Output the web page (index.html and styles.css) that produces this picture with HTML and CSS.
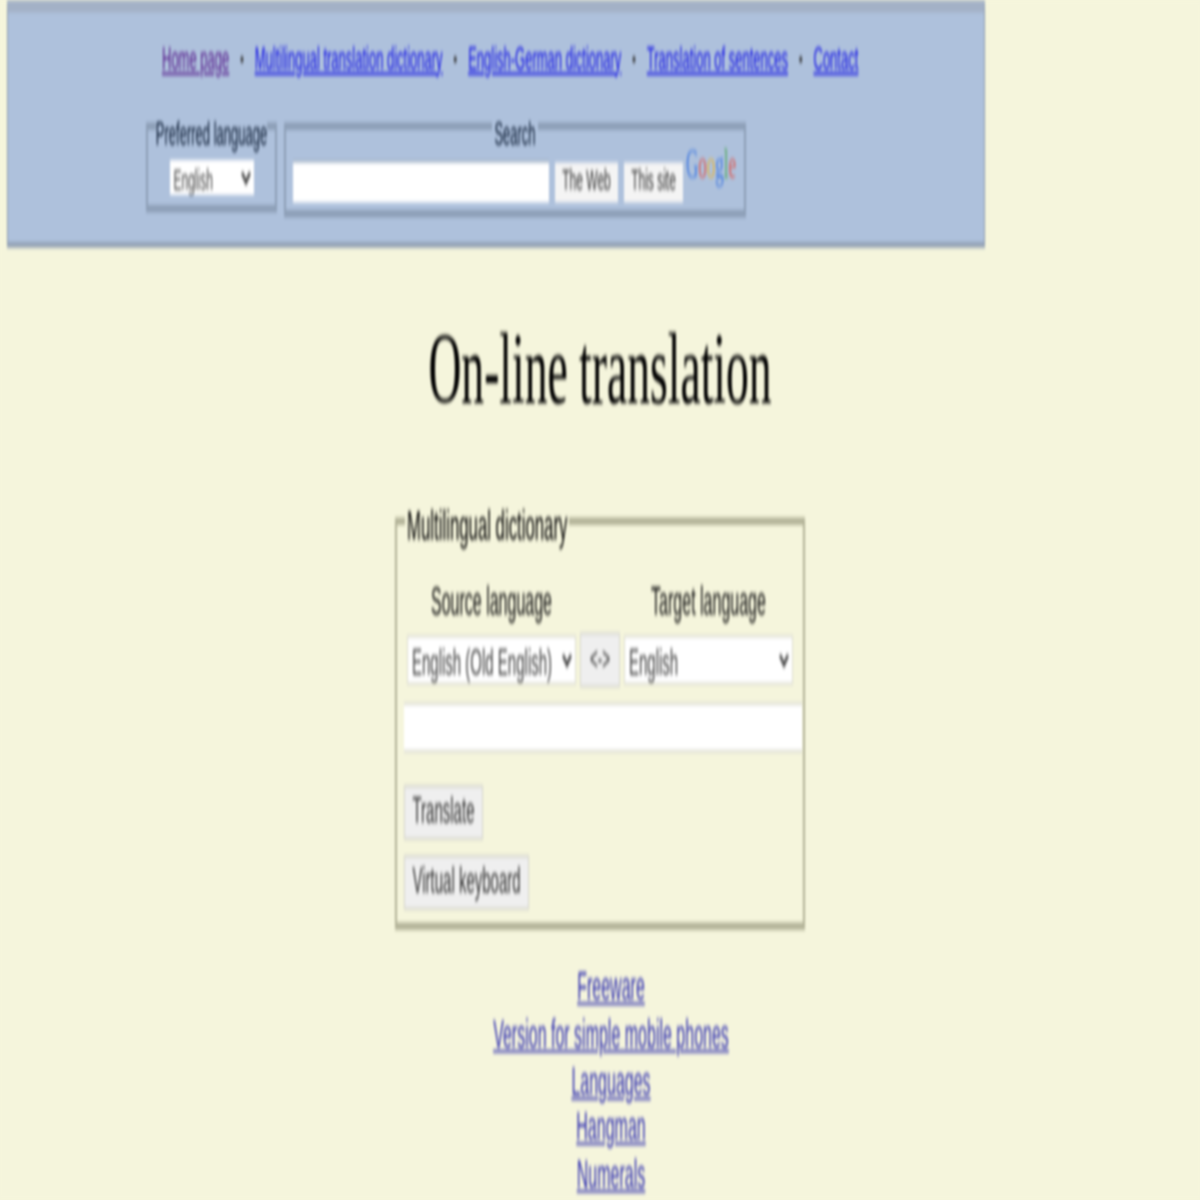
FILE: index.html
```html
<!DOCTYPE html>
<html lang="en">
<head>
<meta charset="utf-8">
<title>On-line translation</title>
<link rel="stylesheet" href="styles.css">
</head>
<body>
<div class="page">
  <header class="head">
    <nav class="nav">
      <a class="visited" href="#">Home page</a><span class="dot">•</span>
      <a href="#">Multilingual translation dictionary</a><span class="dot">•</span>
      <a href="#">English-German dictionary</a><span class="dot">•</span>
      <a href="#">Translation of sentences</a><span class="dot">•</span>
      <a href="#">Contact</a>
    </nav>
    <div class="tools">
      <fieldset class="box lang">
        <legend>Preferred language</legend>
        <select class="small"><option>English</option></select>
      </fieldset>
      <fieldset class="box search">
        <legend>Search</legend>
        <div class="searchrow">
          <input class="q" type="text">
          <button class="sbtn web">The Web</button>
          <button class="sbtn site">This site</button>
          <span class="google"><span class="b">G</span><span class="r">o</span><span class="y">o</span><span class="b">g</span><span class="g">l</span><span class="r">e</span></span>
        </div>
      </fieldset>
    </div>
  </header>
  <h1 class="title">On-line translation</h1>
  <fieldset class="dict">
    <legend>Multilingual dictionary</legend>
    <div class="langs">
      <label class="lab">Source language</label>
      <span></span>
      <label class="lab">Target language</label>
      <select class="big"><option>English (Old English)</option></select>
      <button class="swap">&lt;-&gt;</button>
      <select class="big"><option>English</option></select>
    </div>
    <input class="word" type="text">
    <button class="act first">Translate</button>
    <button class="act">Virtual keyboard</button>
  </fieldset>
  <ul class="links">
    <li><a class="soft" href="#">Freeware</a></li>
    <li><a class="soft" href="#">Version for simple mobile phones</a></li>
    <li><a class="soft" href="#">Languages</a></li>
    <li><a class="soft" href="#">Hangman</a></li>
    <li><a class="soft" href="#">Numerals</a></li>
  </ul>
</div>
</body>
</html>
```
FILE: styles.css
```css
html, body { margin: 0; height: 1200px; overflow: hidden; background: #f5f5dc; }
.page {
  width: 1200px;
  height: 480px;
  overflow: hidden;
  transform: scaleY(2.5);
  transform-origin: 0 0;
  filter: blur(0.8px);
  font-family: "Liberation Sans", Arial, sans-serif;
  font-size: 16px;
  color: #111;
  background: #f5f5dc;
}
.head {
  box-sizing: border-box;
  width: 978px;
  height: 99px;
  margin-left: 7px;
  background: #aec1dc;
  border-top: 5px solid #a3b1c6;
  border-bottom: 2px solid #8d9cb0;
  border-left: 1.5px solid #8d9cb0;
  border-right: 1.5px solid #8d9cb0;
  padding-top: 10.5px;
}
.nav {
  display: flex;
  align-items: center;
  gap: 11px;
  margin-left: 154px;
  font-size: 13px;
  line-height: 15px;
  white-space: nowrap;
}
.nav a { color: #1010e6; text-decoration: underline; }
.nav a.visited { color: #551a8b; }
.dot { color: #333; font-size: 10px; }
.tools {
  display: flex;
  align-items: flex-start;
  gap: 7px;
  margin-top: 13px;
  margin-left: 138px;
}
.box {
  margin: 0;
  padding: 0;
  border: 2px solid #8d9fb7;
  border-top-width: 3px;
  border-bottom-width: 3px;
  box-sizing: border-box;
}
.box legend {
  position: relative;
  top: 3px;
  font-size: 13px;
  line-height: 13px;
  text-align: center;
  padding: 0;
  color: #081830;
}
.lang { width: 131px; height: 41px; }
.small {
  display: block;
  width: 84px;
  height: 14px;
  margin: 7.5px auto 0;
  padding: 0;
  font: 12px "Liberation Sans", Arial, sans-serif;
  background: #fff;
  color: #444;
  border: 0;
}
.search { width: 462px; height: 43px; }
.search legend { margin: 0 auto; padding: 0 2px; }
.searchrow { display: flex; align-items: flex-start; gap: 6px; padding: 7px 0 0 7px; }
.q {
  box-sizing: border-box;
  width: 256px;
  height: 17px;
  border: 0;
  border-top: 1px solid #9fb0c4;
  background: #fff;
  padding: 0;
}
.sbtn {
  box-sizing: border-box;
  height: 16px;
  margin-top: 1px;
  padding: 0 0 1px;
  border: 0;
  background: #f4f4f4;
  color: #333;
  font: 12px "Liberation Sans", Arial, sans-serif;
}
.web { width: 63px; }
.site { width: 59px; }
.google {
  font: 17px "Liberation Serif", serif;
  line-height: 16px;
  margin-top: -5.5px;
  margin-left: -3px;
}
.b { color: #4a7fe0; }
.r { color: #d9605a; }
.y { color: #e2b64a; }
.g { color: #5aa96a; }
.title {
  margin: 28.4px 0 0;
  height: 64.6px;
  text-align: center;
  font: 400 45.6px/1 "Liberation Serif", "Times New Roman", serif;
  color: #000;
  transform: scaleY(0.9);
  transform-origin: 50% 0;
}
.dict {
  box-sizing: border-box;
  width: 410px;
  height: 171.6px;
  margin: 8.6px 0 0 395px;
  padding: 0 0 0 7px;
  border: 2px solid #b3b398;
  border-top-width: 3px;
  border-bottom-width: 3px;
  min-inline-size: 0;
}
.dict legend {
  position: relative;
  top: 2.4px;
  font-size: 16.8px;
  line-height: 16px;
  padding: 0 2px;
  margin-left: 1px;
  color: #000;
}
.langs {
  display: grid;
  grid-template-columns: 167px 40px 167px;
  column-gap: 5px;
  row-gap: 3px;
  align-items: center;
  margin: 15px 0 0 4px;
}
.lab { text-align: center; font-size: 16px; line-height: 18px; color: #111; }
.big {
  box-sizing: border-box;
  width: 167px;
  height: 18px;
  margin: 0;
  padding: 0;
  border: 0;
  box-shadow: 0 0 0 1px #ddddd2;
  background: #fff;
  color: #444;
  font: 15px "Liberation Sans", Arial, sans-serif;
}
.swap {
  box-sizing: border-box;
  width: 40px;
  height: 22px;
  padding: 0;
  border: 1px solid #d8d8d0;
  background: #efefef;
  color: #333;
  font: 13.33px "Liberation Sans", Arial, sans-serif;
}
.word {
  display: block;
  box-sizing: border-box;
  width: 398px;
  height: 20px;
  margin-top: 6px;
  padding: 0;
  border: 0;
  border-top: 1px solid #d8d8cc;
  border-bottom: 1px solid #d8d8cc;
  background: #fff;
}
.act {
  display: block;
  box-sizing: border-box;
  height: 22px;
  margin-top: 6px;
  padding: 0 7.5px 2px;
  border: 1px solid #d5d5cd;
  background: #efefef;
  color: #333;
  font: 15px "Liberation Sans", Arial, sans-serif;
}
.act.first { margin-top: 13px; }
.links {
  list-style: none;
  margin: 14px 0 0 22px;
  padding: 0;
  text-align: center;
  font-size: 16px;
  line-height: 18.7px;
}
.soft { color: #3333b0; text-decoration: underline; }
```
